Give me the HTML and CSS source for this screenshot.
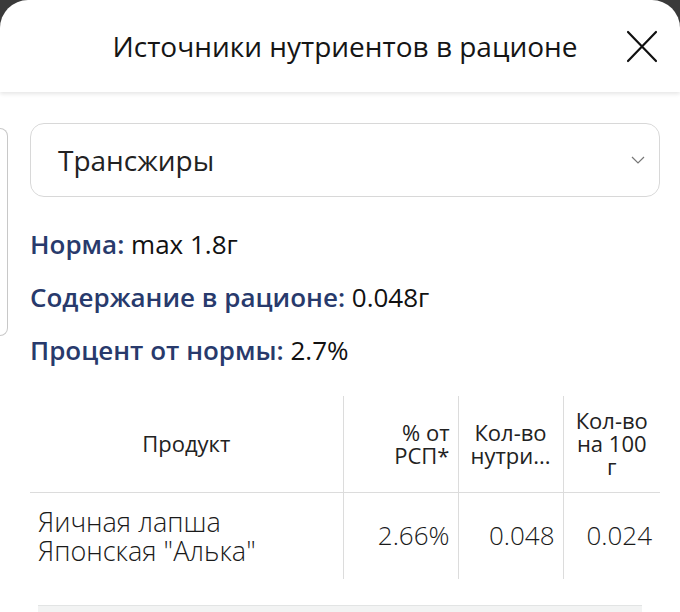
FILE: index.html
```html
<!DOCTYPE html>
<html lang="ru">
<head>
<meta charset="UTF-8">
<meta name="viewport" content="width=device-width, initial-scale=1.0">
<title>Источники нутриентов в рационе</title>
<link rel="stylesheet" href="styles.css">
</head>
<body>
<div class="sheet">
    <div class="sheet-header">
        <span></span>
        <h1>Источники нутриентов в рационе</h1>
        <button class="close-btn" aria-label="Закрыть">
            <svg width="32" height="33" viewBox="0 0 32 33">
                <path d="M2 2 L30 31 M30 2 L2 31" stroke="#111" stroke-width="2.2" stroke-linecap="round" fill="none"/>
            </svg>
        </button>
    </div>
    <div class="sheet-body">
        <div class="peek"></div>
        <div class="main">
            <div class="select-box">
                <span>Трансжиры</span>
                <svg width="14" height="8" viewBox="0 0 14 8">
                    <path d="M1 1 L7 7 L13 1" stroke="#777" stroke-width="1.2" fill="none"/>
                </svg>
            </div>
            <div class="info">
                <p><span class="label">Норма:</span> max 1.8г</p>
                <p><span class="label">Содержание в рационе:</span> 0.048г</p>
                <p><span class="label">Процент от нормы:</span> 2.7%</p>
            </div>
            <table class="sources">
                <thead>
                    <tr>
                        <th class="col-product">Продукт</th>
                        <th class="col-pct">% от<br>РСП*</th>
                        <th class="col-amount">Кол-во<br>нутри...</th>
                        <th class="col-per100">Кол-во<br>на 100<br>г</th>
                    </tr>
                </thead>
                <tbody>
                    <tr>
                        <td class="col-product">Яичная лапша<br>Японская "Алька"</td>
                        <td class="num">2.66%</td>
                        <td class="num">0.048</td>
                        <td class="num">0.024</td>
                    </tr>
                </tbody>
            </table>
        </div>
    </div>
    <div class="next-block"></div>
</div>
</body>
</html>
```

FILE: styles.css
```css
body {
    margin: 0;
    padding: 0;
    background-color: #3a3a3a;
    font-family: 'Open Sans', 'Noto Sans', sans-serif;
    color: #1c1c1c;
}
.sheet {
    background-color: #fff;
    border-radius: 28px 28px 0 0;
    height: 612px;
    overflow: hidden;
}
.sheet-header {
    height: 92px;
    display: grid;
    grid-template-columns: 1fr auto 1fr;
    align-items: center;
    box-shadow: 0 2px 4px rgba(0, 0, 0, 0.1);
}
.sheet-header h1 {
    margin: 0 0 0 10px;
    font-size: 28px;
    font-weight: 400;
    color: #151515;
    white-space: nowrap;
}
.close-btn {
    justify-self: end;
    margin-right: 22px;
    padding: 0;
    border: none;
    background: none;
    display: flex;
}
.sheet-body {
    display: flex;
    padding-top: 31px;
}
.peek {
    flex-shrink: 0;
    width: 7px;
    height: 206px;
    margin-top: 5px;
    margin-right: 22px;
    border: 1.5px solid #c8c8c8;
    border-left: none;
    border-radius: 0 10px 10px 0;
}
.main {
    flex: 1;
    padding-right: 20px;
}
.select-box {
    height: 74px;
    box-sizing: border-box;
    border: 1.5px solid #d8d8d8;
    border-radius: 14px;
    padding: 0 14px 0 27px;
    display: flex;
    align-items: center;
    justify-content: space-between;
    font-size: 28px;
    color: #222;
}
.info {
    margin-top: 21px;
}
.info p {
    margin: 0;
    font-size: 26px;
    line-height: 53px;
    font-weight: 400;
    color: #111;
}
.label {
    color: #283a6c;
    font-weight: 600;
}
.sources {
    width: 100%;
    margin-top: 19px;
    border-collapse: collapse;
    table-layout: fixed;
}
.sources th {
    font-size: 22px;
    font-weight: 500;
    line-height: 23px;
    color: #222;
    height: 96px;
    padding: 0 8px;
    border-bottom: 1.5px solid #dcdcdc;
    box-sizing: border-box;
    text-align: center;
}
.sources td {
    font-size: 26px;
    font-weight: 300;
    line-height: 29px;
    color: #1a1a1a;
    height: 86px;
    padding: 0 8px;
    text-align: left;
}
.sources td.col-product {
    font-size: 27px;
}
.sources th + th,
.sources td + td {
    border-left: 1.5px solid #dcdcdc;
}
.sources th.col-pct {
    text-align: right;
}
.sources td.num {
    text-align: right;
}
.col-product {
    width: 313px;
}
.col-pct {
    width: 115px;
}
.col-amount {
    width: 105px;
}
.next-block {
    margin: 26px 38px 0 38px;
    height: 20px;
    border-top: 1px solid #e2e4e4;
    background-color: #f2f3f3;
}
```
